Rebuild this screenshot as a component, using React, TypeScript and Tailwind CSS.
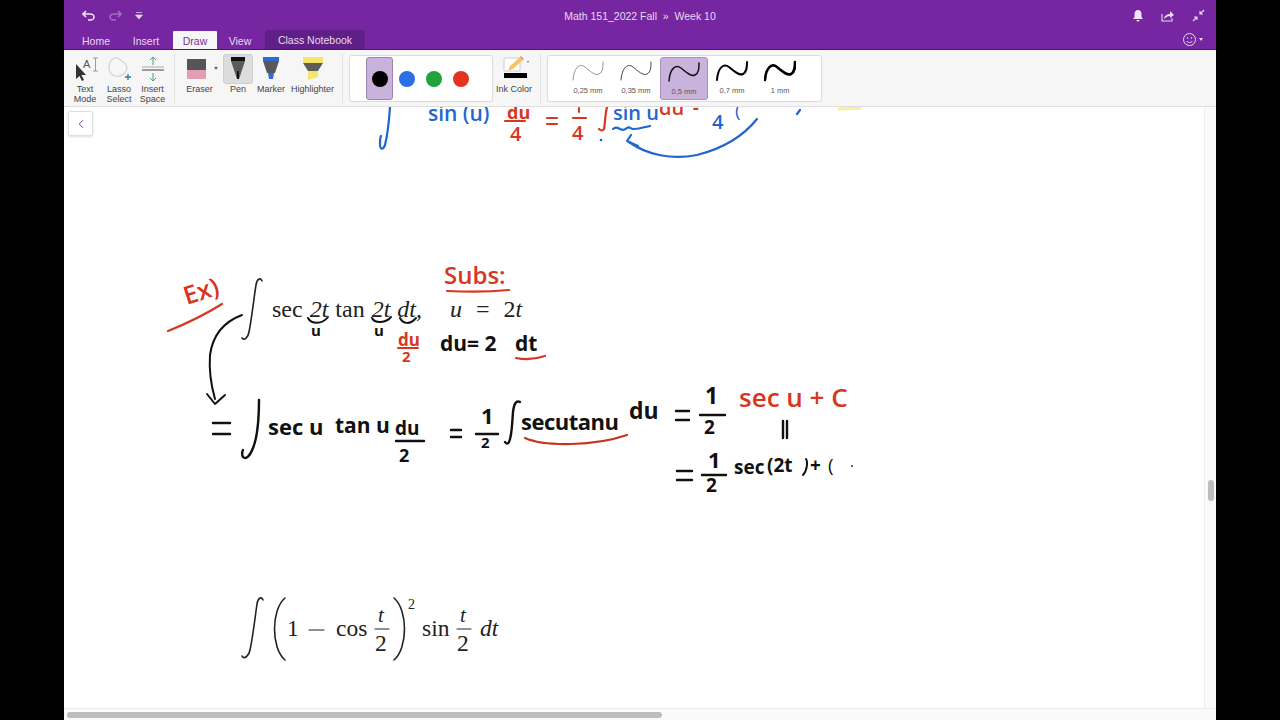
import { ChevronLeft } from 'lucide-react';
import type { ReactNode } from 'react';

const tabs = ['Home', 'Insert', 'Draw', 'View'];

function RibbonButton({ width, lines, icon, active }: { width: string; lines: string[]; icon: ReactNode; active?: boolean }) {
  return (
    <div className={`${width} relative flex flex-col items-center shrink-0`}>
      {active && <div className="absolute left-0 right-0 top-0 h-[30px] rounded-[3px] bg-[#dcdcdc] border border-[#cfcfcf]" />}
      <div className="relative h-[30px] w-full flex items-center justify-center">{icon}</div>
      <div className="text-[9px] leading-[10px] text-[#444] text-center whitespace-nowrap">
        {lines.map((l) => (
          <div key={l}>{l}</div>
        ))}
      </div>
    </div>
  );
}

const thickness = [
  { label: '0,25 mm', sw: 0.7, stroke: '#666' },
  { label: '0,35 mm', sw: 1, stroke: '#444' },
  { label: '0,5 mm', sw: 1.5, stroke: '#111' },
  { label: '0,7 mm', sw: 2, stroke: '#000' },
  { label: '1 mm', sw: 2.6, stroke: '#000' },
];

function Ribbon() {
  return (
    <div className="h-[57px] shrink-0 flex bg-[#f6f6f6] border-b border-[#dedede] pl-[4px] pt-[4px]">
      <div className="flex h-[50px]">
        <RibbonButton
          width="w-[34px]"
          lines={['Text', 'Mode']}
          icon={
            <svg width="30" height="28" viewBox="0 0 30 28">
              <path d="M6 9l0 15 3.500-3 2.500 5 2-1-2.500-5 4.500 0z" fill="#333" />
              <text x="13" y="13" fontSize="11" fill="#555" fontFamily="Liberation Sans">A</text>
              <path d="M23 3h5M25.500 3v13M23 16h5" stroke="#888" strokeWidth="0.8" fill="none" />
            </svg>
          }
        />
        <RibbonButton
          width="w-[34px]"
          lines={['Lasso', 'Select']}
          icon={
            <svg width="26" height="26" viewBox="0 0 26 26">
              <path d="M3 11c0-6 4-10 8-9 3 .5 4 3 6 4 4 2 5 6 3 9-2 4-7 6-11 5-4-1-6-5-6-9z" fill="none" stroke="#d2d2d2" strokeWidth="1.200" />
              <path d="M19 21h6M22 18v6" stroke="#2f7f96" strokeWidth="1.400" />
            </svg>
          }
        />
        <RibbonButton
          width="w-[33px]"
          lines={['Insert', 'Space']}
          icon={
            <svg width="24" height="26" viewBox="0 0 24 26">
              <path d="M12 1v8M9 4l3-3 3 3M12 17v8M9 22l3 3 3-3" stroke="#4a9a8a" strokeWidth="1" fill="none" />
              <path d="M1 11h22" stroke="#aaa" strokeWidth="1" />
              <path d="M1 14h22" stroke="#888" strokeWidth="1.600" />
            </svg>
          }
        />
      </div>
      <div className="w-px h-[49px] bg-[#e2e2e2] ml-[5px] mr-[4px]" />
      <div className="flex h-[50px]">
        <RibbonButton
          width="w-[41px]"
          lines={['Eraser']}
          icon={
            <svg width="22" height="22" viewBox="0 0 22 22" className="mr-[6px]">
              <rect x="1" y="1" width="19" height="11" fill="#55545a" />
              <rect x="1" y="12" width="19" height="9" rx="1" fill="#e59db0" />
            </svg>
          }
        />
        <div className="w-[3px] relative">
          <div className="absolute -left-[6px] top-[13px] border-x-[2.500px] border-t-[3px] border-x-transparent border-t-[#666]" />
        </div>
        <RibbonButton
          width="w-[30px]"
          active
          lines={['Pen']}
          icon={
            <svg width="18" height="24" viewBox="0 0 18 24">
              <rect x="2" y="0" width="14" height="4" fill="#111" />
              <path d="M2 4h14L10 22H8z" fill="#5a5a5c" />
              <path d="M8 14h2v8H8z" fill="#111" />
            </svg>
          }
        />
        <RibbonButton
          width="w-[36px]"
          lines={['Marker']}
          icon={
            <svg width="18" height="24" viewBox="0 0 18 24">
              <path d="M1 0h16v4H1z" fill="#2d6bd1" />
              <path d="M1 4h16l-4 12H5z" fill="#59595b" />
              <path d="M6 16h6l-1 6H7z" fill="#2d6bd1" />
            </svg>
          }
        />
        <RibbonButton
          width="w-[47px]"
          lines={['Highlighter']}
          icon={
            <svg width="22" height="24" viewBox="0 0 22 24">
              <path d="M1 0h20v6H1z" fill="#f7e56b" />
              <path d="M1 6h20l-5 8H6z" fill="#5e5d57" />
              <path d="M6 14h10v6l-10 3z" fill="#f7e56b" />
            </svg>
          }
        />
      </div>
      <div className="w-px h-[49px] bg-[#e2e2e2] ml-[6px] mr-[6px]" />
      <div className="w-[144px] h-[47px] mt-[1px] bg-white border border-[#dcdcdc] rounded-[3px] flex items-center">
        <div className="ml-[16px] w-[27px] h-[43px] rounded-[3px] bg-[#c9b2dc] border border-[#9a86ad] flex items-center justify-center">
          <div className="w-[16px] h-[16px] rounded-full bg-black" />
        </div>
        <div className="ml-[6px] w-[16px] h-[16px] rounded-full bg-[#2a6ee8]" />
        <div className="ml-[11px] w-[16px] h-[16px] rounded-full bg-[#1fa33a]" />
        <div className="ml-[11px] w-[16px] h-[16px] rounded-full bg-[#e5331f]" />
      </div>
      <div className="w-[40px] ml-[1px] flex flex-col items-center">
        <svg width="32" height="28" viewBox="0 0 32 28" className="mt-[1px]">
          <rect x="6" y="3" width="16" height="13" rx="1" fill="#fff" stroke="#ccc" />
          <path d="M10 16l2-5L22 2l3 3-10 9z" fill="#f2c76a" />
          <path d="M22 2l3 3 1-1-3-3z" fill="#e5848f" />
          <rect x="6" y="18" width="23" height="5" fill="#000" />
          <path d="M29 6l2 0-1 2z" fill="#666" />
        </svg>
        <div className="mt-[1px] text-[9px] leading-[10px] text-[#444] whitespace-nowrap">Ink Color</div>
      </div>
      <div className="w-px h-[49px] bg-[#e2e2e2] ml-[6px] mr-[6px]" />
      <div className="w-[275px] h-[47px] mt-[1px] bg-white border border-[#dcdcdc] rounded-[3px] flex items-center pl-[16px]">
        {thickness.map((t, i) => (
          <div
            key={t.label}
            className={`w-[48px] h-[43px] shrink-0 flex flex-col items-center rounded-[3px] ${i === 2 ? 'bg-[#c9b2dc] border border-[#a792ba]' : ''}`}
          >
            <svg width="32" height="24" viewBox="0 0 32 24" className="mt-[2px]">
              <path d="M1 21C2 8 8 4 13 8s10 9 14 7 4-7 4-12" fill="none" stroke={t.stroke} strokeWidth={t.sw} strokeLinecap="round" />
            </svg>
            <div className="mt-[3px] text-[7.500px] leading-[9px] text-[#555] whitespace-nowrap">{t.label}</div>
          </div>
        ))}
      </div>
    </div>
  );
}

function TitleBar() {
  return (
    <div className="h-[50px] shrink-0 bg-[#7526a0] border-b border-[#4f1570] relative">
      <div className="h-[31px] flex items-center">
        <div className="w-[16px]" />
        <svg width="14" height="12" viewBox="0 0 14 12" className="ml-[2px]">
          <path d="M4 1L1 4l3 3M1.500 4H8c3 0 4 2 4 3s-1 3-3 3H6" fill="none" stroke="#f3e3f7" strokeWidth="1.600" />
        </svg>
        <svg width="14" height="12" viewBox="0 0 14 12" className="ml-[12px]">
          <path d="M10 1l3 3-3 3M12.500 4H6C3 4 2 6 2 7s1 3 3 3h3" fill="none" stroke="#a071bb" strokeWidth="1.600" />
        </svg>
        <svg width="8" height="8" viewBox="0 0 8 8" className="ml-[13px]">
          <path d="M1 0.500h6M0.500 3h7L4 7z" fill="#e7d2ee" stroke="#e7d2ee" strokeWidth="0.700" />
        </svg>
        <div className="absolute left-0 right-0 top-[9px] text-center text-[10.500px] leading-[14px] text-[#ecd9f2]">
          Math 151_2022 Fall &nbsp;»&nbsp; Week 10
        </div>
        <div className="ml-auto flex items-center gap-[18px] pr-[11px] relative">
          <svg width="10" height="12" viewBox="0 0 10 12">
            <path d="M5 0c2.500 0 3.500 2 3.500 4v3l1.500 2H0l1.500-2V4C1.500 2 2.500 0 5 0zM3.500 10h3c0 2-3 2-3 0z" fill="#f3e3f7" />
          </svg>
          <svg width="13" height="12" viewBox="0 0 13 12">
            <path d="M1 4v7h10V8" fill="none" stroke="#ecd9f2" strokeWidth="1.100" />
            <path d="M3 9c0-3 3-5 6-5V1l4 4-4 3V6C7 6 5 7 3 9z" fill="#ecd9f2" />
          </svg>
          <svg width="13" height="13" viewBox="0 0 13 13">
            <path d="M12 1L8 5M8 2v3h3M1 12l4-4M2 8h3v3" fill="none" stroke="#ecd9f2" strokeWidth="1.100" />
          </svg>
        </div>
      </div>
      <div className="h-[18px] flex items-end text-[10.500px] font-medium text-[#ecd9f2]">
        <div className="ml-[17px] flex items-end">
          {tabs.map((t) => (
            <div
              key={t}
              className={
                t === 'Draw'
                  ? 'w-[44px] h-[18px] bg-[#f6f6f6] text-[#75309c] text-center leading-[20px] rounded-t-[1px]'
                  : t === 'Home'
                    ? 'w-[30px] mr-[20px] h-[18px] text-center leading-[20px]'
                    : t === 'Insert'
                      ? 'w-[30px] mr-[12px] h-[18px] text-center leading-[20px]'
                      : 'w-[26px] ml-[10px] h-[18px] text-center leading-[20px]'
              }
            >
              {t}
            </div>
          ))}
          <div className="ml-[12px] w-[100px] h-[19px] rounded-t-[3px] bg-[#5e2086] text-center leading-[21px]">Class Notebook</div>
        </div>
        <div className="ml-auto pr-[13px] pb-[2px] flex items-center gap-[2px]">
          <svg width="15" height="15" viewBox="0 0 15 15">
            <circle cx="7.500" cy="7.500" r="6" fill="none" stroke="#ecd9f2" strokeWidth="1" />
            <circle cx="5.500" cy="6" r="0.800" fill="#ecd9f2" />
            <circle cx="9.500" cy="6" r="0.800" fill="#ecd9f2" />
            <path d="M4.500 9c1.500 2 4.500 2 6 0" fill="none" stroke="#ecd9f2" strokeWidth="1" />
          </svg>
          <div className="border-x-[2.500px] border-t-[3px] border-x-transparent border-t-[#ecd9f2]" />
        </div>
      </div>
    </div>
  );
}

const hand = "font-['Open_Sans',sans-serif] font-bold absolute whitespace-nowrap leading-none";
const serif = "font-['Liberation_Serif',serif] absolute whitespace-nowrap leading-none text-[#222]";

function InkStrokes() {
  return (
    <svg viewBox="64 107 1140 601" className="absolute inset-0 w-full h-full" fill="none" strokeLinecap="round" strokeLinejoin="round">
      {/* top of the page, blue and red ink */}
      <g stroke="#1f66cf" strokeWidth="2.200">
        <path d="M390 107c-1 15-3 30-5 38-2 5-5 5-5-1 0-3 0-6 1-8" />
        <path d="M613 129c3-3 5-1 7 0s5 1 7-1 4 1 6 1 5 0 8-1 6-1 9-2" />
        <path d="M757 119c-12 15-32 29-60 36-25 5-50 0-68-13" />
        <path d="M638 146l-11-5 4-6" />
        <path d="M797 114l3-4" />
      </g>
      <circle cx="601" cy="140" r="1.300" fill="#1f66cf" />
      <g stroke="#d8361f" strokeWidth="2.200">
        <path d="M505 121h20" />
        <path d="M573 118h13" />
        <path d="M547 118h10M547 124h10" />
        <path d="M607 107c-2 8-2 18-3 22-1 2-3 2-5 0" />
      </g>
      <path d="M579 108l0 4" stroke="#d8361f" strokeWidth="2" />

      {/* typeset integral, first example */}
      <path d="M262 281c-2-4-5-2-6 4-2 12-4 32-7 47-1 6-5 9-7 6" stroke="#222" strokeWidth="1.600" />
      <g stroke="#d8361f" strokeWidth="2.200">
        <path d="M168 331c20-8 38-17 54-27" />
        <path d="M447 291c20 1 42 1 62-1" />
        <path d="M398 348h20" />
        <path d="M516 358c9 2 20 1 29-2" />
      </g>
      {/* little u braces under the substitution */}
      <g stroke="#111" strokeWidth="2">
        <path d="M308 318c3 6 14 7 20-1" />
        <path d="M372 318c3 6 14 5 19-1" />
        <path d="M400 318c3 6 10 7 16 0" />
        <path d="M242 315c-16 6-29 18-32 40-1 14 1 30 5 44" />
        <path d="M207 394l8 10 10-9" />
      </g>

      {/* second line */}
      <g stroke="#111" strokeWidth="2.400">
        <path d="M213 423h17M213 434h17" />
        <path d="M259 400c0 20-2 38-6 48-3 8-7 12-10 9-1-2-1-5 0-7" />
        <path d="M396 441h28" />
        <path d="M451 430h10M451 437h10" />
        <path d="M476 434h22" />
        <path d="M520 402c-4-2-6 2-7 10-1 12-1 24-4 30-1 2-3 2-4 0" />
        <path d="M676 411h13M676 420h13" />
        <path d="M700 415h25" />
        <path d="M783 421l0 17M787 421l0 17" />
        <path d="M677 471h15M677 480h15" />
        <path d="M702 475h24" />
        <path d="M806 459c2 3 1 12-3 16" strokeWidth="2" />
      </g>
      <circle cx="852" cy="466" r="1" fill="#333" />
      <path d="M525 438c20 9 70 8 102-3" stroke="#c7341f" strokeWidth="2.200" />

      {/* typeset integral and brackets, second exercise */}
      <g stroke="#222" strokeWidth="1.600">
        <path d="M263 600c-2-4-5-2-6 4-2 14-4 32-7 46-1 6-6 10-8 6" />
        <path d="M285 598c-14 12-14 50 0 62" />
        <path d="M394 598c14 12 14 50 0 62" />
        <path d="M309 630h15" strokeWidth="1.100" />
        <path d="M375 629h14M457 629h14" strokeWidth="1" />
      </g>
      <path d="M839 109l21-1" stroke="#f6eea0" strokeWidth="3" />
    </svg>
  );
}

function Page() {
  return (
    <div className="relative flex-1 bg-white overflow-hidden">
      <InkStrokes />
      <div className="absolute left-[4px] top-[4px] w-[25px] h-[25px] rounded-[2px] bg-white border border-[#dfdfdf] shadow-sm flex items-center justify-center">
        <ChevronLeft className="w-[14px] h-[14px] text-[#75309c]" strokeWidth={1.600} />
      </div>

      {/* blue and red ink at the top, cut off by the ribbon */}
      <span className={`${hand} left-[364px] top-[-4px] text-[21px] font-semibold text-[#1f66cf]`}>sin (u)</span>
      <span className={`${hand} left-[443px] top-[-4px] text-[18px] text-[#d8361f]`}>du</span>
      <span className={`${hand} left-[446px] top-[17px] text-[20px] font-semibold text-[#d8361f]`}>4</span>
      <span className={`${hand} left-[508px] top-[16px] text-[20px] font-semibold text-[#d8361f]`}>4</span>
      <span className={`${hand} left-[549px] top-[-4px] text-[20px] font-semibold text-[#1f66cf]`}>sin u</span>
      <span className={`${hand} left-[595px] top-[-9px] text-[20px] font-semibold text-[#d8361f]`}>du</span>
      <span className={`${hand} left-[629px] top-[-9px] text-[18px] text-[#d8361f]`}>-</span>
      <span className={`${hand} left-[648px] top-[5px] text-[20px] font-semibold text-[#1f66cf]`}>4</span>
      <span className={`${hand} left-[671px] top-[-6px] text-[19px] font-normal text-[#1f66cf]`}>(</span>

      {/* first example */}
      <span className={`${hand} left-[119px] top-[171px] text-[25px] font-semibold text-[#d8361f] -rotate-[18deg]`}>Ex)</span>
      <span className={`${hand} left-[380px] top-[156px] text-[24px] font-semibold text-[#d8361f]`}>Subs:</span>
      <span className={`${serif} left-[208px] top-[190px] text-[24px] [word-spacing:1px]`}>
        sec <i>2t</i> tan <i>2t</i> <i>dt</i>,
      </span>
      <span className={`${serif} left-[386px] top-[190px] text-[24px] [word-spacing:1px]`}>
        <i>u</i>&nbsp; =&nbsp; 2<i>t</i>
      </span>
      <span className={`${hand} left-[247px] top-[216px] text-[15px] text-[#111]`}>u</span>
      <span className={`${hand} left-[310px] top-[216px] text-[15px] text-[#111]`}>u</span>
      <span className={`${hand} left-[334px] top-[224px] text-[17px] text-[#d8361f]`}>du</span>
      <span className={`${hand} left-[338px] top-[242px] text-[15px] text-[#d8361f]`}>2</span>
      <span className={`${hand} left-[376px] top-[226px] text-[21px] text-[#111]`}>du= 2</span>
      <span className={`${hand} left-[451px] top-[226px] text-[21px] text-[#111]`}>dt</span>

      {/* second line */}
      <span className={`${hand} left-[204px] top-[308px] text-[22px] text-[#111]`}>sec u</span>
      <span className={`${hand} left-[271px] top-[308px] text-[21px] text-[#111]`}>tan u</span>
      <span className={`${hand} left-[331px] top-[312px] text-[19px] text-[#111]`}>du</span>
      <span className={`${hand} left-[335px] top-[339px] text-[18px] text-[#111]`}>2</span>
      <span className={`${hand} left-[417px] top-[297px] text-[22px] text-[#111]`}>1</span>
      <span className={`${hand} left-[417px] top-[328px] text-[15px] text-[#111]`}>2</span>
      <span className={`${hand} left-[457px] top-[303px] text-[22px] tracking-[-0.5px] text-[#111]`}>secutanu</span>
      <span className={`${hand} left-[565px] top-[292px] text-[23px] text-[#111]`}>du</span>
      <span className={`${hand} left-[641px] top-[277px] text-[23px] text-[#111]`}>1</span>
      <span className={`${hand} left-[640px] top-[311px] text-[19px] text-[#111]`}>2</span>
      <span className={`${hand} left-[675px] top-[277px] text-[26px] font-semibold text-[#d8361f]`}>sec u + C</span>

      {/* third line */}
      <span className={`${hand} left-[644px] top-[341px] text-[22px] text-[#111]`}>1</span>
      <span className={`${hand} left-[642px] top-[369px] text-[19px] text-[#111]`}>2</span>
      <span className={`${hand} left-[670px] top-[351px] text-[19px] text-[#111]`}>sec</span>
      <span className={`${hand} left-[703px] top-[349px] text-[19px] text-[#111]`}>(2t</span>
      <span className={`${hand} left-[746px] top-[349px] text-[19px] text-[#111]`}>+</span>
      <span className={`${hand} left-[764px] top-[349px] text-[19px] font-normal text-[#111]`}>(</span>

      {/* second exercise */}
      <span className={`${serif} left-[223px] top-[510px] text-[23.500px]`}>1</span>
      <span className={`${serif} left-[272px] top-[510px] text-[23.500px]`}>cos</span>
      <span className={`${serif} left-[314px] top-[498px] text-[21px] italic`}>t</span>
      <span className={`${serif} left-[311px] top-[525px] text-[23.500px]`}>2</span>
      <span className={`${serif} left-[344px] top-[491px] text-[14px]`}>2</span>
      <span className={`${serif} left-[358px] top-[510px] text-[23.500px]`}>sin</span>
      <span className={`${serif} left-[396px] top-[498px] text-[21px] italic`}>t</span>
      <span className={`${serif} left-[393px] top-[525px] text-[23.500px]`}>2</span>
      <span className={`${serif} left-[416px] top-[510px] text-[23.500px] italic`}>dt</span>
    </div>
  );
}

export default function App() {
  return (
    <div className="w-[1280px] h-[720px] bg-black flex justify-center overflow-hidden font-['Liberation_Sans',sans-serif]">
      <div className="w-[1152px] h-full flex flex-col bg-[#f6f6f6]">
        <TitleBar />
        <Ribbon />
        <div className="flex-1 flex min-h-0">
          <Page />
          <div className="w-[12px] shrink-0 border-l border-[#ececec] bg-[#fafafa] relative">
            <div className="absolute left-[3px] top-[373px] w-[6px] h-[21px] rounded-full bg-[#bdbdbd]" />
          </div>
        </div>
        <div className="h-[12px] shrink-0 border-t border-[#ececec] bg-[#fafafa] flex items-center pl-[3px]">
          <div className="w-[595px] h-[6px] rounded-full bg-[#bdbdbd]" />
        </div>
      </div>
    </div>
  );
}
